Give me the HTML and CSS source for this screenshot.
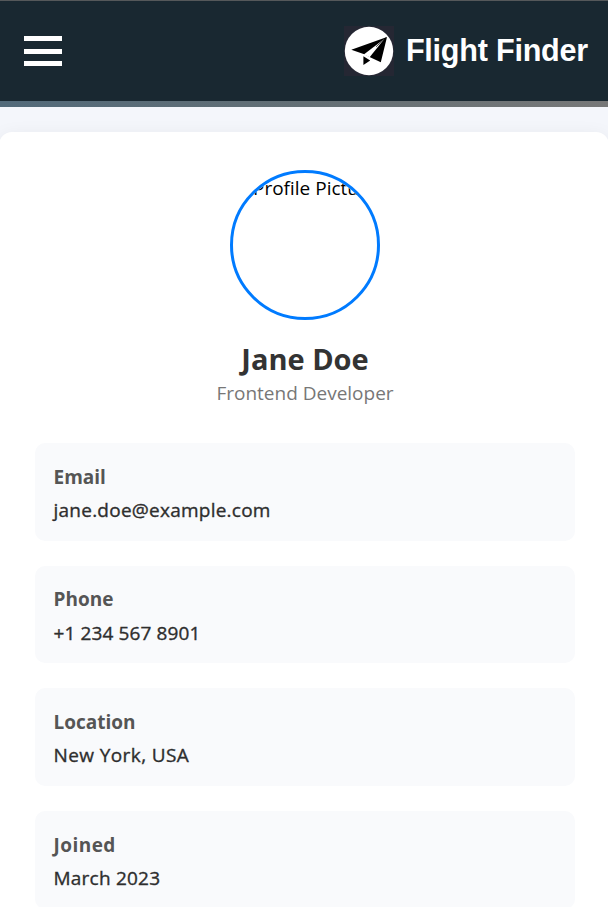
FILE: index.html
```html
<!DOCTYPE html>
<html lang="en">
<head>
<meta charset="utf-8">
<title>Flight Finder</title>
<link rel="stylesheet" href="styles.css">
</head>
<body>
<header class="navbar">
  <button class="menu" aria-label="Menu"><span></span><span></span><span></span></button>
  <div class="brand">
    <svg class="logo" viewBox="0 0 50 50" aria-hidden="true">
      <rect width="50" height="50" fill="#252733"/>
      <circle cx="25" cy="25" r="24.2" fill="#fff"/>
      <path d="M7.3 23.8 43 11 36.8 36.3 25 30.8 20.3 28.2Z M19.4 30.3 26.2 34.6 19.4 38.9Z"/>
      <path d="M19.8 28.4 40.5 12.8 25.6 31.2Z" fill="#fff"/>
      <path d="M42 11.7 32 20.8" stroke="#000" stroke-width=".7"/>
    </svg>
    <span class="brand-name">Flight Finder</span>
  </div>
</header>
<div class="banner"></div>
<main class="profile">
  <div class="avatar"><span>Profile Picture</span></div>
  <h1 class="name">Jane Doe</h1>
  <p class="role">Frontend Developer</p>
  <section class="details">
    <div class="card"><h2>Email</h2><p class="email">jane.doe@example.com</p></div>
    <div class="card"><h2>Phone</h2><p class="phone">+1 234 567 8901</p></div>
    <div class="card"><h2>Location</h2><p class="location">New York, USA</p></div>
    <div class="card"><h2 class="joined-label">Joined</h2><p class="joined">March 2023</p></div>
  </section>
</main>
</body>
</html>
```
FILE: styles.css
```css
* { box-sizing: border-box; }
html { height: 907px; overflow: hidden; }
body {
  margin: 0;
  height: 907px;
  overflow: hidden;
  display: flex;
  flex-direction: column;
  background: #f4f6fb;
  font-family: "Segoe UI", "Open Sans", "Noto Sans", sans-serif;
  font-size: 19px;
  color: #000;
}
h1, h2, p { margin: 0; }
.navbar {
  flex: none;
  height: 101px;
  padding: 0 20px 0 24px;
  border-top: 1px solid #55585a;
  background: #192831;
  display: flex;
  align-items: center;
  justify-content: space-between;
}
.menu {
  width: 38px;
  height: 30px;
  padding: 0;
  border: 0;
  background: none;
  display: flex;
  flex-direction: column;
  justify-content: space-between;
}
.menu span { width: 38px; height: 5px; background: #fff; }
.brand { display: flex; align-items: center; gap: 12px; }
.logo { width: 50px; height: 50px; display: block; }
.brand-name {
  padding-bottom: 2px;
  font: bold 30.6px/48px "Liberation Sans", Arial, sans-serif;
  letter-spacing: -0.24px;
  color: #fff;
  white-space: nowrap;
}
.banner { flex: none; height: 6px; background: linear-gradient(90deg, #526a7a, #636f75 50%, #777878); }
.profile {
  flex: 1;
  min-height: 0;
  margin: 25px -1px 0;
  padding: 38px 34px 0 36px;
  border-radius: 13px 13px 0 0;
  background: #fff;
  box-shadow: 0 5px 19px rgba(0, 0, 0, .08);
}
.avatar {
  width: 150px;
  height: 150px;
  margin: 0 auto;
  padding-left: 20px;
  border: 3px solid #007bff;
  border-radius: 50%;
  overflow: hidden;
  line-height: 30px;
  white-space: nowrap;
}
.name {
  margin-top: 20px;
  font-size: 29px;
  line-height: 38px;
  font-weight: 700;
  text-align: center;
  color: #333;
}
.role { line-height: 30px; text-align: center; color: #777; }
.details { margin-top: 35px; display: grid; gap: 25.2px; }
.card {
  height: 97.5px;
  padding: 17.7px 18px 0 18.5px;
  border-radius: 10px;
  background: #f9fafc;
}
.card h2 { font-size: 19px; line-height: 33px; font-weight: 700; color: #555; }
.card p { padding-top: .3px; line-height: 33px; color: #2e2e2e; -webkit-text-stroke: .35px #2e2e2e; }
.email { letter-spacing: .24px; }
.phone { letter-spacing: .12px; }
.location { letter-spacing: .4px; }
.joined { letter-spacing: .22px; }
.card .joined-label { letter-spacing: .45px; }
```
